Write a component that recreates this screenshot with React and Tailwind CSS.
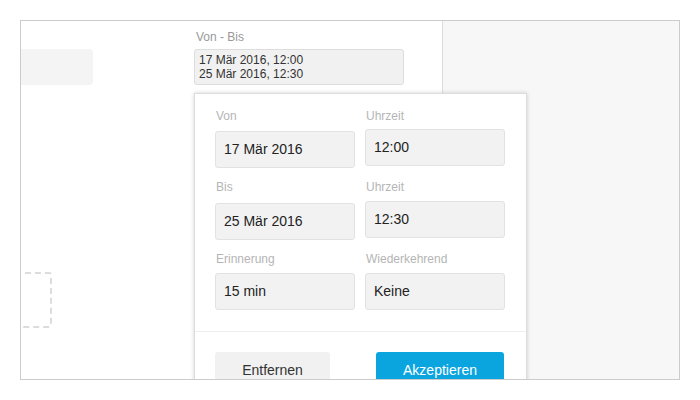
export default function App() {
  const font = { fontFamily: '"Liberation Sans", Arial, sans-serif' };
  const label = "h-[16px] text-[12px] leading-[16px] text-[#b5b5b5] pl-[1px]";
  const input =
    "h-[37px] w-[140px] bg-[#f2f2f2] border border-[#e2e2e2] rounded-[3px] flex items-center px-[8px] text-[14px] text-[#222]";
  return (
    <div className="w-[700px] h-[400px] bg-white p-[20px]" style={font}>
      <div className="w-[660px] h-[360px] border border-[#cccccc] flex overflow-hidden">
        <div className="w-[421px] relative flex">
          <div className="w-[72px] flex flex-col pt-[28px]">
            <div className="h-[36px] w-[80px] -ml-[8px] bg-[#f4f4f4] rounded-[4px]" />
            <div className="mt-[187px] h-[56px] w-[40px] -ml-[9px] border-2 border-dashed border-[#dcdcdc] rounded-[3px]" />
          </div>
          <div className="ml-[101px] pt-[8px] flex flex-col">
            <div className="h-[16px] text-[12px] leading-[16px] text-[#999] pl-[2px]">Von - Bis</div>
            <div className="mt-[4px] w-[210px] h-[36px] bg-[#f1f1f1] border border-[#dddddd] rounded-[3px] px-[4px] pt-[3px] text-[12px] leading-[14px] text-[#333]">
              <div>17 Mär 2016, 12:00</div>
              <div>25 Mär 2016, 12:30</div>
            </div>
          </div>

          <div className="absolute left-[173px] top-[72px] w-[333px] h-[330px] bg-white border border-[#dddddd] shadow-[0_0_4px_rgba(0,0,0,0.18)] z-10">
            <div className="px-[20px] pt-[14px] pb-[21px] border-b border-[#eeeeee] grid grid-cols-[140px_140px] gap-x-[10px] gap-y-[11px]">
              <div className="flex flex-col">
                <div className={label}>Von</div>
                <div className={`${input} mt-[7px]`}>17 Mär 2016</div>
              </div>
              <div className="flex flex-col">
                <div className={label}>Uhrzeit</div>
                <div className={`${input} mt-[5px]`}>12:00</div>
              </div>
              <div className="flex flex-col">
                <div className={label}>Bis</div>
                <div className={`${input} mt-[8px]`}>25 Mär 2016</div>
              </div>
              <div className="flex flex-col">
                <div className={label}>Uhrzeit</div>
                <div className={`${input} mt-[6px]`}>12:30</div>
              </div>
              <div className="flex flex-col">
                <div className={label}>Erinnerung</div>
                <div className={`${input} mt-[6px]`}>15 min</div>
              </div>
              <div className="flex flex-col">
                <div className={label}>Wiederkehrend</div>
                <div className={`${input} mt-[6px]`}>Keine</div>
              </div>
            </div>
            <div className="px-[20px] pt-[20px] flex gap-[46px]">
              <div className="w-[115px] h-[36px] bg-[#f1f1f1] rounded-[3px] flex items-center justify-center text-[14px] text-[#333]">
                Entfernen
              </div>
              <div className="w-[128px] h-[36px] bg-[#0aa5df] rounded-[3px] flex items-center justify-center text-[14px] text-white">
                Akzeptieren
              </div>
            </div>
          </div>
        </div>
        <div className="flex-1 bg-[#f7f7f7] border-l border-[#dddddd]" />
      </div>
    </div>
  );
}
